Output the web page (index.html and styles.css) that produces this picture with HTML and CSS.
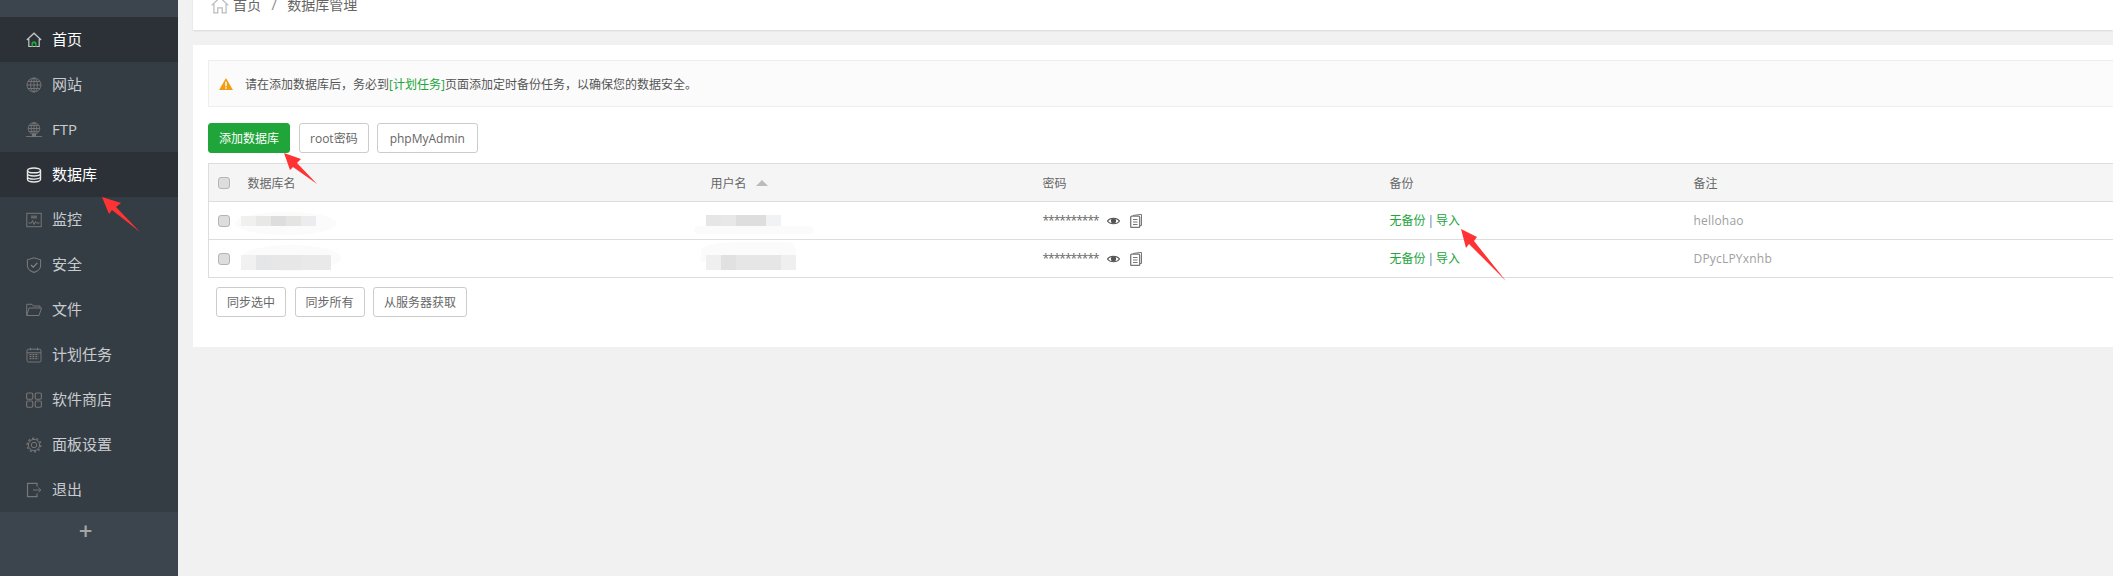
FILE: index.html
```html
<!DOCTYPE html>
<html lang="zh-CN">
<head>
<meta charset="utf-8">
<title>数据库管理</title>
<link rel="stylesheet" href="styles.css">
</head>
<body>
<div class="app">
  <aside class="sidebar">
    <div class="logo"></div>
    <nav class="nav">
      <a class="item active"><svg class="ico" viewBox="0 0 16 16"><path d="M.8 8 8 1.2 15.2 8M2.800 7v7.500h10.400V7" fill="none" stroke="#c8c8c8" stroke-width="1.200"/><path d="M5.500 14.500V10.500Q8 8 10.500 10.500V14.500H9V11.500H7V14.500Z" fill="#20a53a"/></svg><span>首页</span></a>
      <a class="item"><svg class="ico" viewBox="0 0 16 16"><g fill="none" stroke="#777" stroke-width=".9"><circle cx="8" cy="8" r="7"/><ellipse cx="8" cy="8" rx="3.400" ry="7"/><path d="M8 1v14M1 8h14M2 4.500h12M2 11.500h12"/></g></svg><span>网站</span></a>
      <a class="item"><svg class="ico" viewBox="0 0 16 16"><g fill="none" stroke="#777" stroke-width=".9"><circle cx="8" cy="6.500" r="5.800"/><ellipse cx="8" cy="6.500" rx="2.800" ry="5.800"/><path d="M8 .7v11.600M2.200 6.500h11.600M3 3.600h10M3 9.400h10M0 14.500h16"/></g><rect x="6" y="12" width="4" height="3" fill="#777"/></svg><span>FTP</span></a>
      <a class="item active"><svg class="ico" viewBox="0 0 16 16"><g fill="none" stroke="#e8e8e8" stroke-width="1.400"><ellipse cx="8" cy="3.400" rx="6.500" ry="2.400"/><path d="M1.500 3.400v9.200C1.500 14 4.400 15 8 15s6.500-1 6.500-2.400V3.400M1.500 6.600C1.500 8 4.400 9 8 9s6.500-1 6.500-2.400M1.500 9.700c0 1.400 2.900 2.400 6.500 2.400s6.500-1 6.500-2.400"/></g></svg><span>数据库</span></a>
      <a class="item"><svg class="ico" viewBox="0 0 16 16"><g fill="none" stroke="#777" stroke-width="1"><rect x=".8" y="1.300" width="14.400" height="13.400"/><path d="M2.500 11h3l1-2.500 1.500 4 1.500-3 1 1.500h3"/></g><rect x="5" y="3.500" width="6" height="3" fill="#666"/></svg><span>监控</span></a>
      <a class="item"><svg class="ico" viewBox="0 0 16 16"><path d="M8 .8 14.600 2.800V9C14.600 12 11 14.500 8 15.400 5 14.500 1.400 12 1.400 9V2.800Z" fill="none" stroke="#777" stroke-width="1.100"/><path d="M5 8 7.300 10.200 11.300 5.800" fill="none" stroke="#888" stroke-width="1.100"/></svg><span>安全</span></a>
      <a class="item"><svg class="ico" viewBox="0 0 16 16"><path d="M.7 13.500V2.300H6L7.300 4H14V6M.7 13.500H13L15.500 6H3L.7 13.500Z" fill="none" stroke="#777" stroke-width="1"/></svg><span>文件</span></a>
      <a class="item"><svg class="ico" viewBox="0 0 16 16"><rect x="1" y="2.200" width="14" height="12.800" rx="1.500" fill="none" stroke="#777" stroke-width="1"/><path d="M1 5.800h14M4.500.8v2.500M11.500.8v2.500" stroke="#777" stroke-width="1"/><path d="M3.500 7.700h9M3.500 9.700h9M3.500 11.700h9" stroke="#777" stroke-width="1.200" stroke-dasharray="2 .9"/></svg><span>计划任务</span></a>
      <a class="item"><svg class="ico" viewBox="0 0 16 16"><g fill="none" stroke="#777" stroke-width="1.100"><rect x=".6" y="1" width="6.200" height="6.200" rx="1.400"/><rect x="9.200" y="1" width="6.200" height="6.200" rx="1.400"/><rect x=".6" y="9" width="6.200" height="6.200" rx="1.400"/><rect x="9.200" y="9" width="6.200" height="6.200" rx="1.400"/></g></svg><span>软件商店</span></a>
      <a class="item"><svg class="ico" viewBox="0 0 16 16"><g fill="none" stroke="#777" stroke-width="1"><circle cx="8" cy="8" r="2.700"/><circle cx="8" cy="8" r="5.600"/><circle cx="8" cy="8" r="6.900" stroke-width="1.200" stroke-dasharray="2.200 2.130"/></g></svg><span>面板设置</span></a>
      <a class="item"><svg class="ico" viewBox="0 0 16 16"><path d="M11 4.500V1.300H1.500V14.700H11V11.500" fill="none" stroke="#777" stroke-width="1.200"/><path d="M7 8H14.800M12.500 5.800 14.800 8 12.500 10.200" fill="none" stroke="#777" stroke-width="1"/></svg><span>退出</span></a>
    </nav>
    <div class="add">+</div>
  </aside>

  <main class="main">
    <div class="topbar">
      <svg class="home" viewBox="0 0 16 16"><path d="M.6 8.300 8 1.300 15.400 8.300M2.600 7V15H6V10.500H10V15H13.400V7" fill="none" stroke="#bbb" stroke-width="1.100"/></svg>
      <span>首页</span><span class="sep">/</span><span>数据库管理</span>
    </div>
    <section class="panel">
      <div class="alert">
        <svg class="warn" viewBox="0 0 15 13"><path d="M7.500 0 15 13H0Z" fill="#f39c12"/><rect x="6.700" y="4" width="1.600" height="5" fill="#fff"/><rect x="6.700" y="10" width="1.600" height="1.600" fill="#fff"/></svg>
        <span>请在添加数据库后&#xFF0C;务必到<a class="green">[计划任务]</a>页面添加定时备份任务&#xFF0C;以确保您的数据安全。</span>
      </div>
      <div class="toolbar">
        <button class="btn primary">添加数据库</button>
        <button class="btn root">root密码</button>
        <button class="btn">phpMyAdmin</button>
      </div>
      <table class="table">
        <colgroup><col class="c0"><col class="c1"><col class="c2"><col class="c3"><col class="c4"><col></colgroup>
        <thead>
          <tr><th><input class="check" type="checkbox"></th><th>数据库名</th><th>用户名<i class="sort"></i></th><th>密码</th><th>备份</th><th>备注</th></tr>
        </thead>
        <tbody>
          <tr>
            <td><input class="check" type="checkbox"></td>
            <td><div class="blur name1"></div></td>
            <td><div class="blur user1"></div></td>
            <td><div class="pw"><span class="stars">**********</span>
              <svg class="eye" viewBox="0 0 14 10"><path d="M.5 5C3 1 11 1 13.500 5 11 9 3 9 .5 5Z" fill="none" stroke="#555" stroke-width="1.200"/><circle cx="7" cy="4.800" r="2.800" fill="#555"/></svg>
              <svg class="copy" viewBox="0 0 12 14"><path d="M3 1.500 10 .5H11.500V11.500H10" fill="none" stroke="#777" stroke-width="1"/><rect x=".7" y="2.200" width="9" height="11.300" rx="1" fill="#fff" stroke="#777" stroke-width="1.300"/><path d="M3 5.500h4.500M3 8h4.500M3 10.500h4.500" stroke="#777"/></svg></div></td>
            <td class="backup"><a class="green">无备份</a><span class="bar">|</span><a class="green">导入</a></td>
            <td class="note">hellohao</td>
          </tr>
          <tr>
            <td><input class="check" type="checkbox"></td>
            <td><div class="blur name2"></div></td>
            <td><div class="blur user2"></div></td>
            <td><div class="pw"><span class="stars">**********</span>
              <svg class="eye" viewBox="0 0 14 10"><path d="M.5 5C3 1 11 1 13.500 5 11 9 3 9 .5 5Z" fill="none" stroke="#555" stroke-width="1.200"/><circle cx="7" cy="4.800" r="2.800" fill="#555"/></svg>
              <svg class="copy" viewBox="0 0 12 14"><path d="M3 1.500 10 .5H11.500V11.500H10" fill="none" stroke="#777" stroke-width="1"/><rect x=".7" y="2.200" width="9" height="11.300" rx="1" fill="#fff" stroke="#777" stroke-width="1.300"/><path d="M3 5.500h4.500M3 8h4.500M3 10.500h4.500" stroke="#777"/></svg></div></td>
            <td class="backup"><a class="green">无备份</a><span class="bar">|</span><a class="green">导入</a></td>
            <td class="note">DPycLPYxnhb</td>
          </tr>
        </tbody>
      </table>
      <div class="sync">
        <button class="btn">同步选中</button>
        <button class="btn">同步所有</button>
        <button class="btn">从服务器获取</button>
      </div>
    </section>
  </main>
</div>
<svg class="arrows" viewBox="0 0 2113 576">
  <polygon points="102,197 121,203 116,207 140,232 112,210 109,214"/>
  <polygon points="284,153 301,159 297,163 317,184 293,167 290,170"/>
  <polygon points="1461,229 1477,237 1474,241 1506,281 1469,244 1466,248"/>
</svg>
</body>
</html>
```
FILE: styles.css
```css
* { box-sizing: border-box; }
html, body { margin: 0; height: 100%; overflow: hidden; }
body {
  position: relative;
  background: #f1f1f1;
  color: #666;
  font: 12px "Open Sans", "Noto Sans CJK SC", sans-serif;
}
.app { display: flex; margin-top: -20px; height: 596px; }

.sidebar {
  width: 178px;
  flex: none;
  display: flex;
  flex-direction: column;
  background: #3c444d;
}
.logo { height: 37px; }
.nav { background: #353d44; }
.item {
  height: 45px;
  display: flex;
  align-items: center;
  gap: 10px;
  padding-left: 26px;
  color: #c8ccd0;
  font-size: 15px;
}
.item span { padding-bottom: 2px; }
.item.active { background: #2c3138; color: #fff; }
.ico { width: 16px; height: 16px; flex: none; }
.add {
  height: 40px;
  margin-top: 2px;
  padding-right: 7px;
  text-align: center;
  font-size: 24px;
  line-height: 34px;
  font-weight: 600;
  color: #a5a5a5;
}

.main { flex: 1; min-width: 0; padding-left: 15px; }
.topbar {
  height: 50px;
  background: #fff;
  box-shadow: 0 1px 2px rgba(0, 0, 0, .1);
  display: flex;
  align-items: center;
  padding-left: 18px;
  font-size: 14px;
  color: #666;
}
.topbar span { padding-bottom: 2px; }
.home { width: 18px; height: 18px; margin-right: 4px; }
.sep { margin: 0 10.500px; color: #888; }

.panel {
  margin-top: 15px;
  height: 302px;
  background: #fff;
  padding: 15px 0 0 15px;
}
.alert {
  height: 47px;
  display: flex;
  align-items: center;
  gap: 12px;
  padding-left: 10px;
  background: #fbfbfb;
  border: 1px solid #eee;
  border-right: 0;
  color: #555;
}
.alert span { padding-top: 1px; }
.warn { width: 14px; height: 12px; }
.green { color: #20a53a; }
.toolbar { display: flex; gap: 8px; margin-top: 16px; }
.btn {
  height: 30px;
  padding: 0 12px;
  background: #fff;
  border: 1px solid #ccc;
  border-radius: 3px;
  color: #666;
  font: 12px "Open Sans", "Noto Sans CJK SC", sans-serif;
}
.root { padding: 0 10px; }
.primary {
  padding: 0 10px;
  margin-right: 1px;
  background: #20a53a;
  border-color: #20a53a;
  color: #fff;
}

.table {
  width: 1905px;
  margin-top: 10px;
  table-layout: fixed;
  border-collapse: collapse;
  border-left: 1px solid #ddd;
}
.c0 { width: 39px; }
.c1 { width: 463px; }
.c2 { width: 332px; }
.c3 { width: 347px; }
.c4 { width: 304px; }
th, td {
  height: 38px;
  padding: 0;
  text-align: left;
  font-weight: 400;
  border-top: 1px solid #ddd;
  border-bottom: 1px solid #ddd;
}
thead tr { background: #f5f5f5; }
th:first-child, td:first-child { padding-left: 9px; }
.check {
  appearance: none;
  display: block;
  width: 12px;
  height: 12px;
  margin: 0;
  background: #ddd;
  border: 1px solid #b5b5b5;
  border-radius: 3px;
}
.sort {
  display: inline-block;
  margin-left: 9px;
  border: 6px solid transparent;
  border-top: 0;
  border-bottom-color: #bbb;
  vertical-align: 2px;
}
.pw { display: flex; align-items: center; }
.stars { width: 64px; letter-spacing: -1px; }
.eye { width: 13px; height: 10px; }
.copy { width: 12px; height: 14px; margin-left: 10px; }
td.backup { padding-bottom: 2px; }
.bar { margin: 0 2px; color: #4a7fb0; }
.note { color: #a0a0a0; letter-spacing: .2px; padding-bottom: 1px; }

.blur { position: relative; height: 10px; }
.blur::before {
  content: "";
  position: absolute;
  background: #fbfbfb;
  border-radius: 50%;
}
.blur::after {
  content: "";
  position: absolute;
  inset: 0;
}
.name1 { margin-left: -7px; width: 75px; }
.name1::before { left: -6px; top: -4px; width: 102px; height: 23px; }
.name1::after {
  background: linear-gradient(90deg, #f0f0ef 0 15px, #e8e8e6 15px 30px, #ddd 30px 45px, #e4e4e2 45px 60px, #ececee 60px);
}
.name2 { margin-left: -7px; width: 90px; height: 15px; margin-top: 8px; }
.name2::before { left: 0; top: -10px; width: 100px; height: 26px; }
.name2::after {
  background: linear-gradient(90deg, #f2f1f1 0 15px, #e5e6e7 15px 30px, #e7e7e7 30px 60px, #e9e9e9 60px);
}
.user1 { margin-left: -5px; width: 75px; height: 11px; margin-top: -1px; }
.user1::before { left: -12px; top: 11px; width: 120px; height: 8px; border-radius: 8px; }
.user1::after {
  background: linear-gradient(90deg, #e6e6e6 0 15px, #e8e8e8 15px 30px, #dedede 30px 60px, #f1f2f4 60px);
}
.user2 { margin-left: -5px; width: 90px; height: 15px; margin-top: 8px; }
.user2::before { left: -5px; top: -13px; width: 95px; height: 20px; border-radius: 40% 8px 0 0; }
.user2::after {
  background: linear-gradient(90deg, #efefef 0 15px, #e1e1e1 15px 30px, #e6e6e6 30px 75px, #efefef 75px);
}

.sync { display: flex; gap: 8.500px; margin: 9px 0 0 8px; }
.sync .btn { padding: 0 10px; }

.arrows {
  position: absolute;
  top: 0;
  left: 0;
  width: 2113px;
  height: 576px;
  pointer-events: none;
}
.arrows polygon { fill: #ff3333; }
```
